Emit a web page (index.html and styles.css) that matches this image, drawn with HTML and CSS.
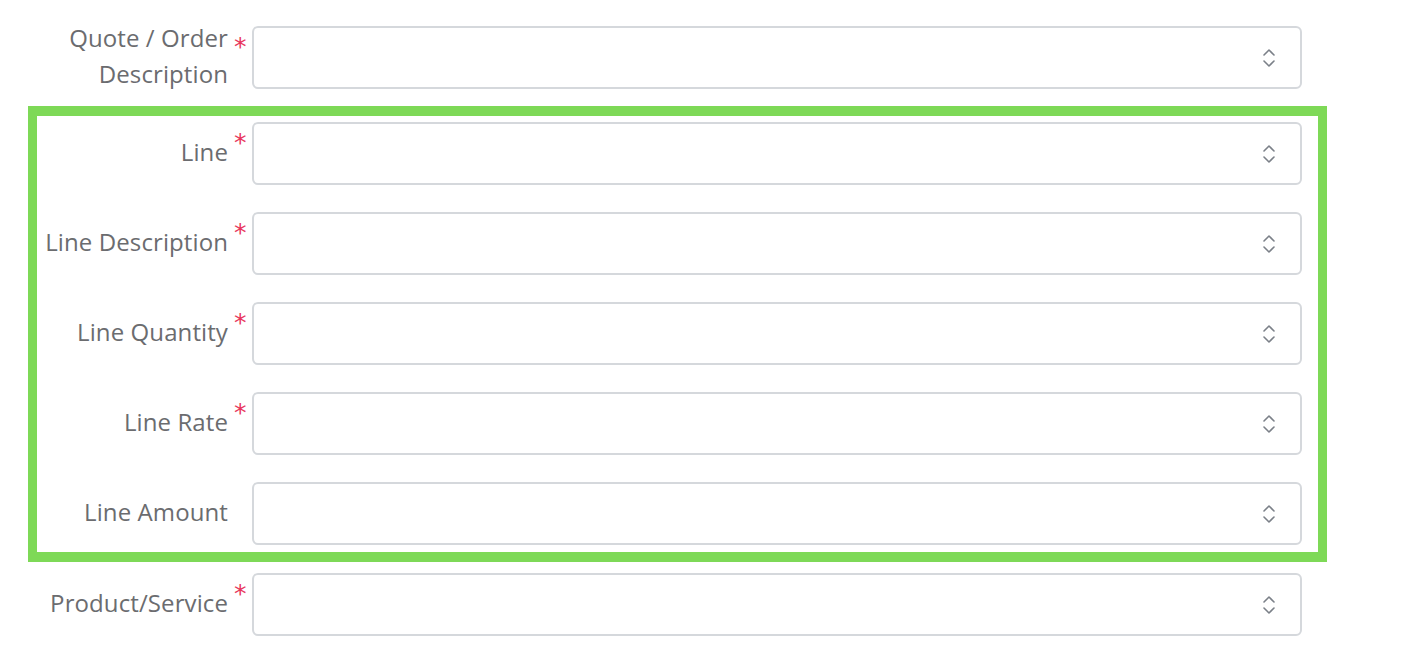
FILE: index.html
```html
<!DOCTYPE html>
<html>
<head>
<meta charset="utf-8">
<link rel="stylesheet" href="styles.css">
</head>
<body>
<form class="form">
  <div class="row">
    <label class="label two">Quote / Order<br>Description</label>
    <span class="req">*</span>
    <div class="select"><svg class="chev" viewBox="0 0 14 20" width="14" height="20"><path d="M2 7 L7 2 L12 7 M2 13 L7 18 L12 13"/></svg></div>
  </div>
  <div class="group">
    <div class="row">
      <label class="label">Line</label>
      <span class="req">*</span>
      <div class="select"><svg class="chev" viewBox="0 0 14 20" width="14" height="20"><path d="M2 7 L7 2 L12 7 M2 13 L7 18 L12 13"/></svg></div>
    </div>
    <div class="row">
      <label class="label">Line Description</label>
      <span class="req">*</span>
      <div class="select"><svg class="chev" viewBox="0 0 14 20" width="14" height="20"><path d="M2 7 L7 2 L12 7 M2 13 L7 18 L12 13"/></svg></div>
    </div>
    <div class="row">
      <label class="label">Line Quantity</label>
      <span class="req">*</span>
      <div class="select"><svg class="chev" viewBox="0 0 14 20" width="14" height="20"><path d="M2 7 L7 2 L12 7 M2 13 L7 18 L12 13"/></svg></div>
    </div>
    <div class="row">
      <label class="label">Line Rate</label>
      <span class="req">*</span>
      <div class="select"><svg class="chev" viewBox="0 0 14 20" width="14" height="20"><path d="M2 7 L7 2 L12 7 M2 13 L7 18 L12 13"/></svg></div>
    </div>
    <div class="row">
      <label class="label">Line Amount</label>
      <span class="req"></span>
      <div class="select"><svg class="chev" viewBox="0 0 14 20" width="14" height="20"><path d="M2 7 L7 2 L12 7 M2 13 L7 18 L12 13"/></svg></div>
    </div>
  </div>
  <div class="row last">
    <label class="label">Product/Service</label>
    <span class="req">*</span>
    <div class="select"><svg class="chev" viewBox="0 0 14 20" width="14" height="20"><path d="M2 7 L7 2 L12 7 M2 13 L7 18 L12 13"/></svg></div>
  </div>
</form>
</body>
</html>
```
FILE: styles.css
```css
html, body {
  margin: 0;
  padding: 0;
  background: #ffffff;
}
body {
  font-family: "Open Sans", "Liberation Sans", sans-serif;
}
.form {
  padding: 26px 0 0 28px;
  display: flex;
  flex-direction: column;
  align-items: flex-start;
}
.row {
  display: flex;
  align-items: center;
  height: 63px;
}
.label {
  width: 200px;
  text-align: right;
  font-size: 24px;
  color: #6b6c6f;
  line-height: 36px;
  letter-spacing: 0.1px;
  padding-bottom: 4px;
}
.group .label {
  width: 191px;
}
.req {
  width: 24px;
  box-sizing: border-box;
  padding-left: 6px;
  align-self: flex-start;
  margin-top: 9px;
  font-family: "DejaVu Sans", sans-serif;
  font-size: 25px;
  line-height: 24px;
  color: #e8365d;
  height: 24px;
}
.select {
  width: 1050px;
  height: 63px;
  box-sizing: border-box;
  border: 2px solid #d5d8dc;
  border-radius: 6px;
  display: flex;
  align-items: center;
  justify-content: flex-end;
  padding-right: 24px;
}
.chev {
  display: block;
}
.chev path {
  fill: none;
  stroke: #7b8088;
  stroke-width: 1.6;
  stroke-linecap: round;
  stroke-linejoin: round;
}
.group {
  margin-top: 17px;
  border: 10px solid #7ed957;
  border-left-width: 9px;
  border-right-width: 9px;
  padding: 6px 16px 7px 0;
  display: flex;
  flex-direction: column;
  gap: 27px;
}
.row.last {
  margin-top: 11px;
}
```
